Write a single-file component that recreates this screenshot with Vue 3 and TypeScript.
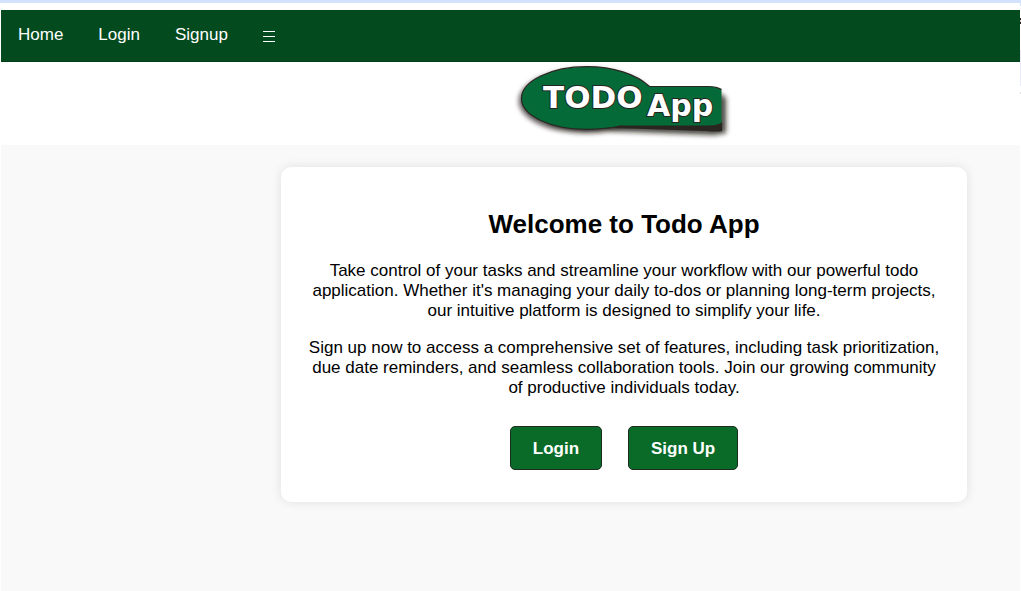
<script setup lang="ts">
interface NavItem {
  label: string
  href: string
}

const navItems: NavItem[] = [
  { label: 'Home', href: '#home' },
  { label: 'Login', href: '#login' },
  { label: 'Signup', href: '#signup' },
]

const paragraphs: string[] = [
  "Take control of your tasks and streamline your workflow with our powerful todo application. Whether it's managing your daily to-dos or planning long-term projects, our intuitive platform is designed to simplify your life.",
  'Sign up now to access a comprehensive set of features, including task prioritization, due date reminders, and seamless collaboration tools. Join our growing community of productive individuals today.',
]
</script>

<template>
  <div class="page">
    <nav class="navbar" aria-label="Main">
      <a v-for="item in navItems" :key="item.label" class="nav-link" :href="item.href">{{ item.label }}</a>
      <button class="menu" type="button" aria-label="Menu">
        <svg width="12" height="12" viewBox="0 0 12 12" aria-hidden="true">
          <path d="M0 .5H12M0 5.5H12M0 10.5H12" stroke="#fff" stroke-width="1" />
        </svg>
      </button>
    </nav>

    <header class="brand">
      <svg class="logo" width="220" height="82" viewBox="0 0 220 82" role="img" aria-label="TODO App">
        <defs>
          <filter id="soft" x="-10%" y="-20%" width="120%" height="150%">
            <feGaussianBlur stdDeviation="2.6" />
          </filter>
        </defs>
        <g filter="url(#soft)" fill="#1d1512">
          <ellipse cx="72" cy="39" rx="67" ry="32" opacity=".75" />
          <path d="M30 60Q55 71 90 69L200 73L212 71V36L204 30V62H90Z" opacity=".8" />
        </g>
        <path d="M95 63L200 60H208V69Q204 70 192 69L100 66Q80 67 70 66Z" fill="#2b2522" />
        <path
          d="M7.500 36.500C7.500 19 37 4.700 73 4.700C99 4.700 122 12 135.500 24.500H194Q203 24.500 207.500 27.500V61Q202 63.500 194 63.500H108Q92 67.300 73 67.300C37 67.300 7.500 54 7.500 36.500Z"
          fill="#046a38"
        />
        <path
          d="M207.500 27.500Q203 24.500 194 24.500H135.500C122 12 99 4.700 73 4.700C37 4.700 7.500 19 7.500 36.500C7.500 54 37 67.300 73 67.300Q92 67.300 108 63.500"
          fill="none"
          stroke="#2b2723"
          stroke-width="1.200"
        />
        <g class="logo-text">
          <text class="logo-todo" x="29" y="46">TODO</text>
          <text x="133" y="54">App</text>
        </g>
      </svg>
    </header>

    <main class="content">
      <section class="card">
        <h1>Welcome to Todo App</h1>
        <p v-for="text in paragraphs" :key="text">{{ text }}</p>
        <div class="actions">
          <button type="button">Login</button>
          <button type="button">Sign Up</button>
        </div>
      </section>
    </main>
    <div class="window-edge" aria-hidden="true"></div>
  </div>
</template>

<style>
body {
  margin: 0;
  background: #fff;
}
</style>

<style scoped>
.page {
  position: relative;
  box-sizing: border-box;
  min-height: 100vh;
  display: flex;
  flex-direction: column;
  padding: 7px 1px 0;
  border-top: 3px solid #d3e3fd;
  background: #fff;
  color: #000;
  font-family: "Liberation Sans", Arial, sans-serif;
  font-size: 17px;
  line-height: 20px;
}

.navbar {
  display: flex;
  align-items: center;
  gap: 35px;
  box-sizing: border-box;
  height: 52px;
  padding: 0 17px 2px;
  background: #034a1f;
  border-bottom: 1px solid #02401a;
}

.nav-link {
  color: #fff;
  text-decoration: none;
}

.menu {
  display: flex;
  padding: 4px 0 0;
  border: 0;
  background: none;
}

.brand {
  display: flex;
  justify-content: center;
  padding: 0 0 1px 227px;
}

.logo {
  display: block;
}

.logo-text {
  font-family: "DejaVu Sans", sans-serif;
  font-size: 30px;
  font-weight: 700;
  fill: #fff;
  stroke: #242421;
  stroke-width: 2px;
  paint-order: stroke;
}

.logo-todo {
  font-size: 31px;
}

.content {
  flex: 1;
  display: flex;
  justify-content: center;
  align-items: flex-start;
  padding: 22px 20px 22px 247px;
  background: #f9f9f9;
}

.card {
  box-sizing: border-box;
  width: 100%;
  max-width: 686px;
  padding: 42px 22px 32px;
  border-radius: 10px;
  background: #fff;
  box-shadow: 0 0 11px rgba(0, 0, 0, 0.1);
  text-align: center;
}

h1 {
  margin: 0 0 21px;
  font-size: 26px;
  line-height: 31px;
}

p {
  margin: 0 0 17px;
}

.actions {
  display: flex;
  justify-content: center;
  gap: 26px;
  padding-top: 11px;
}

.actions button {
  box-sizing: border-box;
  height: 44px;
  padding: 2px 22px 0;
  border: 1px solid #1d2b20;
  border-radius: 5px;
  background: #0a6b28;
  color: #fff;
  font: inherit;
  font-weight: 700;
}

.window-edge {
  position: absolute;
  top: 0;
  right: 0;
  width: 1px;
  height: 92px;
  background: linear-gradient(
    #d3e3fd 0 3px,
    #fff 3px 15px,
    #222 15px 17px,
    #ccc 17px 19px,
    #222 19px 21px,
    #fff 21px 47px,
    #ebebfa 47px 83px,
    #fff 83px 89px,
    #ddd 89px 91px,
    #fff 91px
  );
}
</style>
